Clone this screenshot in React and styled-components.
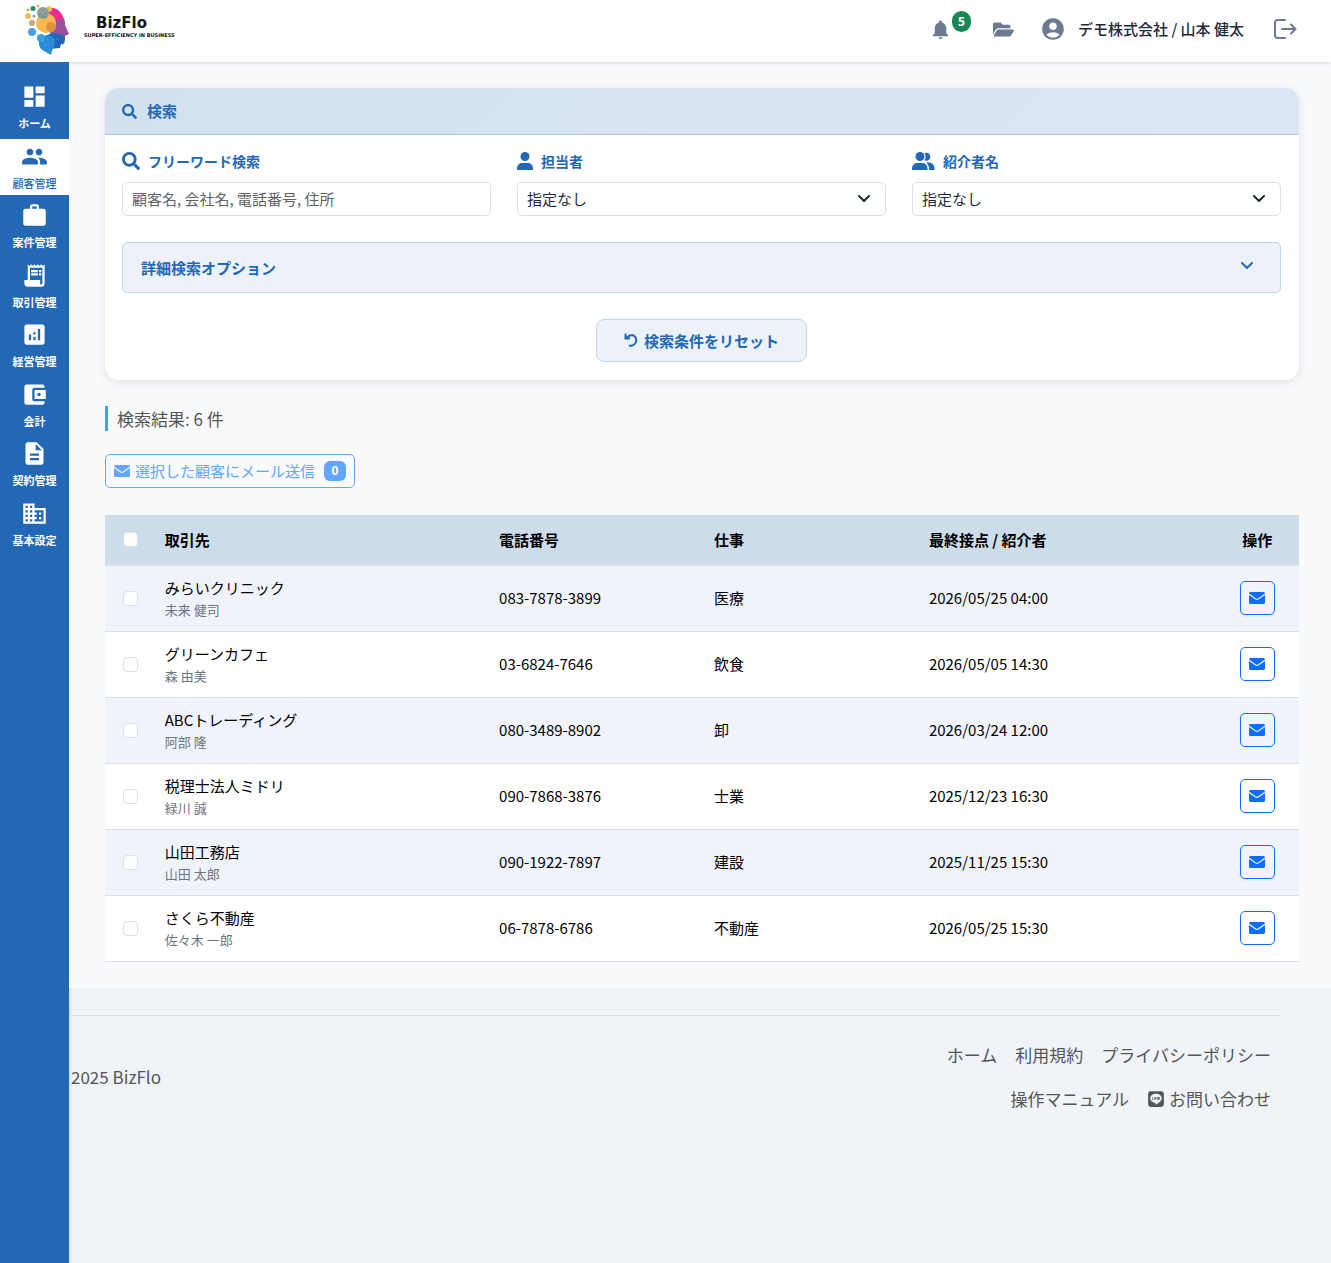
import React, { useState } from 'react';
import styled, { createGlobalStyle, css } from 'styled-components'
import { MdDashboard, MdPeople, MdWork, MdReceiptLong, MdAnalytics, MdAccountBalanceWallet, MdDescription, MdBusiness, MdAccountCircle, MdNotifications } from 'react-icons/md'
import { FaSearch, FaFolderOpen, FaLine } from 'react-icons/fa'

const GlobalStyle = createGlobalStyle`
  * {
    box-sizing: border-box;
  }
  body {
    margin: 0;
    background: #f0f4f9;
    color: #1f2937;
    font-family: 'Noto Sans CJK JP', 'Noto Sans', sans-serif;
    font-size: 15px;
    line-height: 24px;
  }
  button, input, select {
    font: inherit;
    margin: 0;
  }
  a {
    color: inherit;
    text-decoration: none;
  }
  svg {
    flex: none;
  }
`

const Page = styled.div`
  display: flex;
  flex-direction: column;
  min-height: 100vh;
`

const Header = styled.header`
  display: flex;
  align-items: center;
  justify-content: space-between;
  height: 62px;
  padding: 0 34px 4px 24px;
  background: #fff;
  box-shadow: 0 1px 3px rgba(100, 130, 160, 0.25);
  z-index: 1;
`

const Brand = styled.a`
  display: flex;
  align-items: center;
  gap: 14px;
`

const BrandText = styled.span`
  display: flex;
  flex-direction: column;
  padding-bottom: 4px;
  color: #14141f;
  font-family: 'DejaVu Sans', sans-serif;
  font-weight: 700;
`

const BrandName = styled.span`
  padding-left: 12px;
  font-size: 15px;
  line-height: 16px;
`

const BrandTag = styled.span`
  font-size: 5px;
  line-height: 8px;
  white-space: nowrap;
`

const Tools = styled.div`
  display: flex;
  align-items: center;
  color: #6b7a90;
  font-weight: 500;
`

const Tool = styled.button`
  display: flex;
  align-items: center;
  padding: 0;
  border: 0;
  background: none;
  color: inherit;
  margin-right: ${(props) => props.$gap || 0}px;
`

const Count = styled.span`
  width: 19px;
  height: 21px;
  margin-bottom: 16px;
  border-radius: 10px;
  background: #198754;
  color: #fff;
  font-family: 'Noto Sans', sans-serif;
  font-size: 12px;
  font-weight: 700;
  line-height: 21px;
  text-align: center;
`

const UserName = styled.span`
  margin: 0 30px 0 12px;
  color: #1f2937;
`

const Body = styled.div`
  display: flex;
  flex: 1;
`

const Sidebar = styled.nav`
  flex: none;
  width: 69px;
  padding-top: 17px;
  background: #2268b5;
  box-shadow: 1px 0 4px rgba(0, 0, 0, 0.12);
`

const Menu = styled.ul`
  display: flex;
  flex-direction: column;
  justify-content: space-between;
  height: 473px;
  margin: 0;
  padding: 0;
  list-style: none;
`

const MenuLink = styled.a`
  display: flex;
  flex-direction: column;
  align-items: center;
  gap: 5px;
  height: 56px;
  padding-top: 4px;
  color: #fff;
  font-size: 11px;
  font-weight: 700;
  line-height: 17px;
  ${(props) => props.$active && css`
    background: #fff;
    color: #2268b5;
    font-weight: 500;
  `}
`

const Column = styled.div`
  flex: 1;
  min-width: 0;
`

const Main = styled.main`
  padding: 26px 32px 26px 36px;
  background: #f9fafc;
`

const Card = styled.section`
  overflow: hidden;
  border-radius: 14px;
  background: #fff;
  box-shadow: 0 2px 10px rgba(40, 60, 90, 0.12);
`

const CardHeader = styled.h2`
  display: flex;
  align-items: center;
  gap: 10px;
  height: 47px;
  margin: 0;
  padding: 0 17px;
  border-bottom: 1px solid #adc8e3;
  background: linear-gradient(135deg, #d3e1ee, #dbe6f4);
  color: #2268b5;
  font-size: 15px;
  font-weight: 700;
`

const CardBody = styled.form`
  display: flex;
  flex-direction: column;
  gap: 26px;
  padding: 14px 18px 18px 17px;
`

const Fields = styled.div`
  display: grid;
  grid-template-columns: repeat(3, 1fr);
  gap: 26px;
`

const Field = styled.div`
  display: flex;
  flex-direction: column;
  gap: 9px;
`

const Label = styled.label`
  display: flex;
  align-items: center;
  gap: 8px;
  color: #2268b5;
  font-size: 14px;
  font-weight: 700;
`

const control = css`
  width: 100%;
  height: 34px;
  padding: 0 9px;
  border: 1px solid #dcdfe6;
  border-radius: 5px;
  background: #fff;
  color: #1f2937;
`

const TextInput = styled.input`
  ${control}
  padding-bottom: 2px;
  &::placeholder {
    color: #5f6368;
    opacity: 1;
  }
`

const SelectBox = styled.div`
  display: grid;
  align-items: center;
  > * {
    grid-area: 1 / 1;
  }
  svg {
    justify-self: end;
    margin-right: 16px;
    pointer-events: none;
  }
`

const Select = styled.select`
  ${control}
  appearance: none;
`

const Options = styled.button`
  display: flex;
  align-items: center;
  justify-content: space-between;
  height: 51px;
  padding: 0 27px 0 18px;
  border: 1px solid #c0d5ea;
  border-radius: 5px;
  background: #edf2fa;
  color: #2268b5;
  font-weight: 700;
  svg {
    margin-bottom: 4px;
  }
`

const Reset = styled.button`
  display: flex;
  align-items: center;
  justify-content: center;
  align-self: center;
  gap: 5px;
  height: 43px;
  padding: 0 27px;
  border: 1px solid #c0d5ea;
  border-radius: 8px;
  background: #edf2f9;
  color: #2268b5;
  font-weight: 700;
`

const Result = styled.p`
  margin: 26px 0 23px;
  padding-left: 9px;
  border-left: 3px solid #47a1e4;
  color: #555;
  font-size: 17px;
  line-height: 25px;
`

const BulkMail = styled.button`
  display: flex;
  align-items: center;
  gap: 5px;
  height: 34px;
  margin-bottom: 27px;
  padding: 0 8px;
  border: 1px solid #64a5fe;
  border-radius: 5px;
  background: none;
  color: #64a5fe;
`

const Selected = styled.span`
  width: 22px;
  height: 20px;
  margin-left: 4px;
  border-radius: 6px;
  background: #64a5fe;
  color: #fff;
  font-family: 'Noto Sans', sans-serif;
  font-size: 12px;
  font-weight: 700;
  line-height: 20px;
`

const Table = styled.table`
  width: 100%;
  border-collapse: collapse;
  table-layout: fixed;
  color: #000;
`

const Th = styled.th`
  width: ${(props) => props.$width};
  height: 50px;
  padding: 0 12px;
  border-bottom: 2px solid #dce0e6;
  background: #cddceb;
  font-weight: 700;
  text-align: ${(props) => props.$align || 'left'};
`

const Tr = styled.tr`
  height: 66px;
  border-bottom: 1px solid #dce0e6;
  background: #fff;
  &:nth-child(odd) {
    background: #f0f3fa;
  }
`

const Td = styled.td`
  padding: 0 12px;
  text-align: ${(props) => props.$align || 'left'};
`

const Check = styled.input`
  display: block;
  appearance: none;
  width: 15px;
  height: 15px;
  margin-left: 6px;
  border: 1px solid #dcdfe6;
  border-radius: 4px;
  background: #fff;
  &:checked {
    background: #0d6efd;
  }
`

const Contact = styled.div`
  color: #6c757d;
  font-size: 13px;
  line-height: 20px;
`

const MailButton = styled.button`
  display: inline-flex;
  align-items: center;
  justify-content: center;
  width: 35px;
  height: 34px;
  padding: 0;
  border: 1px solid #0d6efd;
  border-radius: 5px;
  background: none;
  color: #0d6efd;
  vertical-align: middle;
`

const Footer = styled.footer`
  display: flex;
  align-items: center;
  justify-content: space-between;
  margin: 27px 51px 0 0;
  padding: 17px 9px 0 2px;
  border-top: 1px solid #dce0e6;
  color: #555;
  font-size: 17px;
`

const FooterLinks = styled.ul`
  display: flex;
  flex-wrap: wrap;
  justify-content: flex-end;
  column-gap: 18px;
  width: 33%;
  margin: 0;
  padding: 0;
  list-style: none;
  line-height: 44px;
  white-space: nowrap;
  a {
    display: flex;
    align-items: center;
    gap: 4px;
  }
`

const menu = [
  { label: 'ホーム', icon: MdDashboard },
  { label: '顧客管理', icon: MdPeople, active: true },
  { label: '案件管理', icon: MdWork },
  { label: '取引管理', icon: MdReceiptLong },
  { label: '経営管理', icon: MdAnalytics },
  { label: '会計', icon: MdAccountBalanceWallet },
  { label: '契約管理', icon: MdDescription },
  { label: '基本設定', icon: MdBusiness },
]

const customers = [
  { name: 'みらいクリニック', contact: '未来 健司', tel: '083-7878-3899', job: '医療', last: '2026/05/25 04:00' },
  { name: 'グリーンカフェ', contact: '森 由美', tel: '03-6824-7646', job: '飲食', last: '2026/05/05 14:30' },
  { name: 'ABCトレーディング', contact: '阿部 隆', tel: '080-3489-8902', job: '卸', last: '2026/03/24 12:00' },
  { name: '税理士法人ミドリ', contact: '緑川 誠', tel: '090-7868-3876', job: '士業', last: '2025/12/23 16:30' },
  { name: '山田工務店', contact: '山田 太郎', tel: '090-1922-7897', job: '建設', last: '2025/11/25 15:30' },
  { name: 'さくら不動産', contact: '佐々木 一郎', tel: '06-7878-6786', job: '不動産', last: '2026/05/25 15:30' },
]

const Logo = () => (
  <svg width="46" height="54" viewBox="0 0 46 54" aria-hidden="true">
    <path d="M30 14 L39 15 C41 18 41 20 41 23 L45 32 L41 34 L40 36 L26 32 L28 22 Z" fill="#99509c" />
    <path d="M23 9 C25 5 32 5 36 10 C38 12 39 14 39 16 C35 19 31 19 28 16 Z" fill="#ec2a92" />
    <circle cx="25" cy="7" r="3" fill="#f9bd58" />
    <circle cx="22" cy="21" r="10" fill="#f9b74f" />
    <circle cx="27" cy="25" r="5" fill="#dc923e" />
    <circle cx="19" cy="11" r="6" fill="#909c96" />
    <path d="M21 35 C25 30 36 30 41 35 C41 41 40 43 37 42 L36 46 L26 47 Z" fill="#2167b4" />
    <path d="M15 40 C16 33 26 31 30 36 C33 42 28 46 27 53 L20 49 C15 46 15 43 15 40 Z" fill="#2b8bd9" />
    <circle cx="17" cy="36" r="4" fill="#35a1e3" />
    <circle cx="8" cy="30" r="4" fill="#46a3e6" />
    <circle cx="8" cy="21" r="3" fill="#cba77d" />
    <circle cx="4" cy="14" r="3" fill="#f9bd58" />
    <circle cx="10" cy="14" r="1.6" fill="#909c96" />
    <circle cx="9" cy="6.500" r="2.500" fill="#258a5f" />
    <circle cx="4" cy="8" r="1.300" fill="#dc923e" />
    <circle cx="14" cy="4" r="1.600" fill="#f9bd58" />
    <g fill="#23906a">
      <circle cx="18" cy="14" r="0.700" />
      <circle cx="21" cy="12" r="0.700" />
      <circle cx="21" cy="15" r="0.700" />
      <circle cx="16" cy="12" r="0.700" />
    </g>
    <g fill="#8cc4f0">
      <circle cx="19" cy="39" r="0.500" />
      <circle cx="23" cy="37" r="0.500" />
      <circle cx="21" cy="42" r="0.500" />
      <circle cx="25" cy="42" r="0.500" />
      <circle cx="33" cy="37" r="0.500" />
    </g>
  </svg>
)

const Envelope = () => (
  <svg width="16" height="12" viewBox="0 0 16 12" fill="currentColor" aria-hidden="true">
    <path d="M1 0H15L16 1V1.500L9 6.500Q8 7.100 7 6.500L0 1.500V1Z" />
    <path d="M0 2.900L6.500 7.500Q8 8.400 9.500 7.500L16 2.900V11L15 12H1L0 11Z" />
  </svg>
)

const Chevron = () => (
  <svg width="12" height="8" viewBox="0 0 12 8" fill="none" stroke="currentColor" strokeWidth="2" strokeLinecap="round" strokeLinejoin="round" aria-hidden="true">
    <path d="M1 1L6 6L11 1" />
  </svg>
)

const Undo = () => (
  <svg width="15" height="15" viewBox="0 0 15 15" fill="none" stroke="currentColor" strokeWidth="2" aria-hidden="true">
    <path d="M1.500 0.500V5.500H6" />
    <path d="M2 5C4.500 2.500 6.500 2 8.500 2A5.500 5.500 0 1 1 5 12.500" />
  </svg>
)

const Logout = () => (
  <svg width="23" height="20" viewBox="0 0 23 20" fill="none" stroke="currentColor" strokeWidth="2" strokeLinecap="round" strokeLinejoin="round" aria-hidden="true">
    <path d="M11 1H3.500A2.500 2.500 0 0 0 1 3.500V16.500A2.500 2.500 0 0 0 3.500 19H11" />
    <path d="M8 10H21.500M17 5.500L21.500 10L17 14.500" />
  </svg>
)

const Person = () => (
  <svg width="16" height="18" viewBox="0 0 16 18" fill="currentColor" aria-hidden="true">
    <circle cx="8" cy="4.500" r="4.500" />
    <path d="M0 18V16.500C0 13 2.500 11 5.500 11H10.500C13.500 11 16 13 16 16.500V18Z" />
  </svg>
)

const People = () => (
  <svg width="23" height="18" viewBox="0 0 23 18" fill="currentColor" aria-hidden="true">
    <circle cx="8" cy="4.500" r="4.500" />
    <path d="M0 18V16.500C0 13 2.500 11 5.500 11H10C13 11 15.500 13 15.500 16.500V18Z" />
    <path d="M12.500 1.200A4 4 0 1 1 12.500 8.300Q14.700 4.800 12.500 1.200Z" />
    <path d="M14 10.500H16.500C20 10.500 22.500 13 22.500 16.500V18H17V16.500C17 14 16 12 14 10.500Z" />
  </svg>
)

const SelectField = ({ id, label, icon }) => (
  <Field>
    <Label htmlFor={id}>{icon}{label}</Label>
    <SelectBox>
      <Select id={id}>
        <option>指定なし</option>
      </Select>
      <Chevron />
    </SelectBox>
  </Field>
)

const App = () => {
  const [selected, setSelected] = useState([]);

  const toggle = (name) => {
    setSelected(selected.includes(name) ? selected.filter((n) => n !== name) : [...selected, name])
  }
  const toggleAll = () => {
    setSelected(selected.length === customers.length ? [] : customers.map((c) => c.name))
  }

  return (
    <Page>
      <GlobalStyle />
      <Header>
        <Brand href="#">
          <Logo />
          <BrandText>
            <BrandName>BizFlo</BrandName>
            <BrandTag>SUPER-EFFICIENCY IN BUSINESS</BrandTag>
          </BrandText>
        </Brand>
        <Tools>
          <Tool type="button" aria-label="通知" $gap={22}>
            <MdNotifications size={23} />
            <Count>5</Count>
          </Tool>
          <Tool type="button" aria-label="ファイル" $gap={26}>
            <FaFolderOpen size={21} />
          </Tool>
          <MdAccountCircle size={26} />
          <UserName>デモ株式会社 / 山本 健太</UserName>
          <Tool type="button" aria-label="ログアウト">
            <Logout />
          </Tool>
        </Tools>
      </Header>
      <Body>
        <Sidebar>
          <Menu>
            {menu.map(({ label, icon: Icon, active }) => (
              <li key={label}>
                <MenuLink href="#" $active={active}>
                  <Icon size={27} />
                  {label}
                </MenuLink>
              </li>
            ))}
          </Menu>
        </Sidebar>
        <Column>
          <Main>
            <Card>
              <CardHeader><FaSearch size={15} />検索</CardHeader>
              <CardBody>
                <Fields>
                  <Field>
                    <Label htmlFor="word"><FaSearch size={18} />フリーワード検索</Label>
                    <TextInput id="word" placeholder="顧客名, 会社名, 電話番号, 住所" />
                  </Field>
                  <SelectField id="staff" label="担当者" icon={<Person />} />
                  <SelectField id="referrer" label="紹介者名" icon={<People />} />
                </Fields>
                <Options type="button">
                  詳細検索オプション
                  <Chevron />
                </Options>
                <Reset type="reset"><Undo />検索条件をリセット</Reset>
              </CardBody>
            </Card>
            <Result>検索結果: 6 件</Result>
            <BulkMail type="button">
              <Envelope />
              選択した顧客にメール送信
              <Selected>{selected.length}</Selected>
            </BulkMail>
            <Table>
              <thead>
                <tr>
                  <Th $width="4%">
                    <Check type="checkbox" aria-label="すべて選択" checked={selected.length === customers.length} onChange={toggleAll} />
                  </Th>
                  <Th $width="28%">取引先</Th>
                  <Th $width="18%">電話番号</Th>
                  <Th $width="18%">仕事</Th>
                  <Th $width="25%">最終接点 / 紹介者</Th>
                  <Th $width="7%" $align="center">操作</Th>
                </tr>
              </thead>
              <tbody>
                {customers.map((c) => (
                  <Tr key={c.name}>
                    <Td>
                      <Check type="checkbox" aria-label={c.name} checked={selected.includes(c.name)} onChange={() => toggle(c.name)} />
                    </Td>
                    <Td>
                      {c.name}
                      <Contact>{c.contact}</Contact>
                    </Td>
                    <Td>{c.tel}</Td>
                    <Td>{c.job}</Td>
                    <Td>{c.last}</Td>
                    <Td $align="center">
                      <MailButton type="button" aria-label="メール"><Envelope /></MailButton>
                    </Td>
                  </Tr>
                ))}
              </tbody>
            </Table>
          </Main>
          <Footer>
            <span>2025 BizFlo</span>
            <FooterLinks>
              <li><a href="#">ホーム</a></li>
              <li><a href="#">利用規約</a></li>
              <li><a href="#">プライバシーポリシー</a></li>
              <li><a href="#">操作マニュアル</a></li>
              <li><a href="#"><FaLine size={18} />お問い合わせ</a></li>
            </FooterLinks>
          </Footer>
        </Column>
      </Body>
    </Page>
  )
}

export default App;
